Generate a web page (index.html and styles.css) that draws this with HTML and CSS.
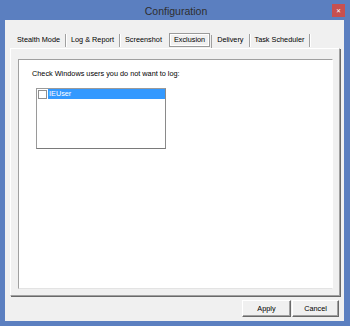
FILE: index.html
```html
<!DOCTYPE html>
<html lang="en">
<head>
  <meta charset="UTF-8">
  <title>Configuration</title>
  <link rel="stylesheet" href="styles.css">
</head>
<body>
  <div class="window">
    <div class="titlebar">
      <span></span>
      <span class="title">Configuration</span>
      <span class="close">&#x2715;</span>
    </div>

    <div class="client">
      <div class="tabs">
        <div class="tab">Stealth Mode</div>
        <div class="tab">Log &amp; Report</div>
        <div class="tab before-active">Screenshot</div>
        <div class="tab active">Exclusion</div>
        <div class="tab">Delivery</div>
        <div class="tab">Task Scheduler</div>
      </div>

      <div class="page">
        <div class="sheet">
          <p class="hint">Check Windows users you do not want to log:</p>
          <div class="listbox">
            <div class="item selected">
              <span class="check"></span>
              <span class="name">IEUser</span>
            </div>
          </div>
        </div>
      </div>

      <div class="buttons">
        <button class="apply">Apply</button>
        <button class="cancel">Cancel</button>
      </div>
    </div>
  </div>
</body>
</html>
```

FILE: styles.css
```css
body {
  margin: 0;
  padding: 0;
  font-family: 'Liberation Sans', Arial, sans-serif;
  font-size: 7.3px;
  color: #000;
}

.window {
  width: 350px;
  height: 326px;
  box-sizing: border-box;
  background: #5b7fc0;
  padding: 0 6px 5px 5px;
  display: flex;
  flex-direction: column;
}

.titlebar {
  height: 20px;
  display: grid;
  grid-template-columns: 1fr auto 1fr;
  align-items: center;
}

.title {
  font-size: 10.5px;
  color: #2e2e2e;
  padding-left: 3px;
  margin-top: 1px;
}

.close {
  justify-self: end;
  width: 13px;
  height: 13px;
  margin-right: -1px;
  margin-top: 1px;
  background: #c75050;
  color: #fff;
  font-size: 6px;
  display: flex;
  align-items: center;
  justify-content: center;
}

.client {
  flex: 1;
  background: #f0f0f0;
  display: flex;
  flex-direction: column;
}

/* tab strip */
.tabs {
  display: flex;
  margin: 14px 0 1px 7px;
  height: 13px;
}

.tab {
  padding: 0 5px;
  line-height: 12px;
  border-right: 1px solid #a0a0a0;
  box-shadow: 1px 0 0 #fff;
  white-space: nowrap;
}

.tab.before-active {
  border-right-color: transparent;
  box-shadow: none;
}

.tab.active {
  padding: 0 4px;
  margin: -1px 2px 0 1px;
  border: 1px solid #9a9a9a;
  box-shadow: inset 1px 1px 0 #fff, inset -1px -1px 0 #fff;
  line-height: 11px;
  height: 12px;
  position: relative;
}

.tab.active::after {
  content: "";
  position: absolute;
  right: -3px;
  top: 1px;
  height: 13px;
  border-right: 1px solid #a0a0a0;
}

/* tab page */
.page {
  flex: 1;
  margin: 0 4px 0 5px;
  border-left: 1px solid #fff;
  border-top: 1px solid #fff;
  border-right: 1px solid #a0a0a0;
  border-bottom: 1px solid #a0a0a0;
  box-shadow: 1px 1px 0 #696969;
  display: flex;
}

.sheet {
  flex: 1;
  margin: 10px 6px 6px 7px;
  background: #fff;
  border-left: 1px solid #a0a0a0;
  border-top: 1px solid #a0a0a0;
  border-right: 1px solid #fff;
  border-bottom: 1px solid #e3e3e3;
  padding: 9px 13px;
}

.hint {
  margin: 0 0 10px;
  line-height: 9px;
}

.listbox {
  width: 130px;
  height: 61px;
  box-sizing: border-box;
  margin-left: 4px;
  border: 1px solid #9a9a9a;
  border-bottom-color: #7a7a7a;
  border-right-color: #8a8a8a;
}

.item {
  display: flex;
  align-items: center;
  height: 10px;
  padding-left: 1px;
}

.check {
  width: 7px;
  height: 7px;
  border: 1px solid #8f8f8f;
  background: #fff;
  margin-right: 1px;
}

.name {
  flex: 1;
  height: 10px;
  line-height: 10px;
  padding-left: 1px;
}

.item.selected .name {
  background: #3399ff;
  color: #fff;
}

/* bottom buttons */
.buttons {
  display: flex;
  justify-content: flex-end;
  gap: 1px;
  margin: 4px 5px 4px 0;
}

button {
  font-family: inherit;
  font-size: 7.3px;
  height: 17px;
  padding: 0;
  background: #f0f0f0;
  border: 1px solid;
  border-color: #fff #696969 #696969 #fff;
  box-shadow: inset -1px -1px 0 #a0a0a0;
  color: #000;
}

.apply {
  width: 49px;
}

.cancel {
  width: 47px;
}
```
